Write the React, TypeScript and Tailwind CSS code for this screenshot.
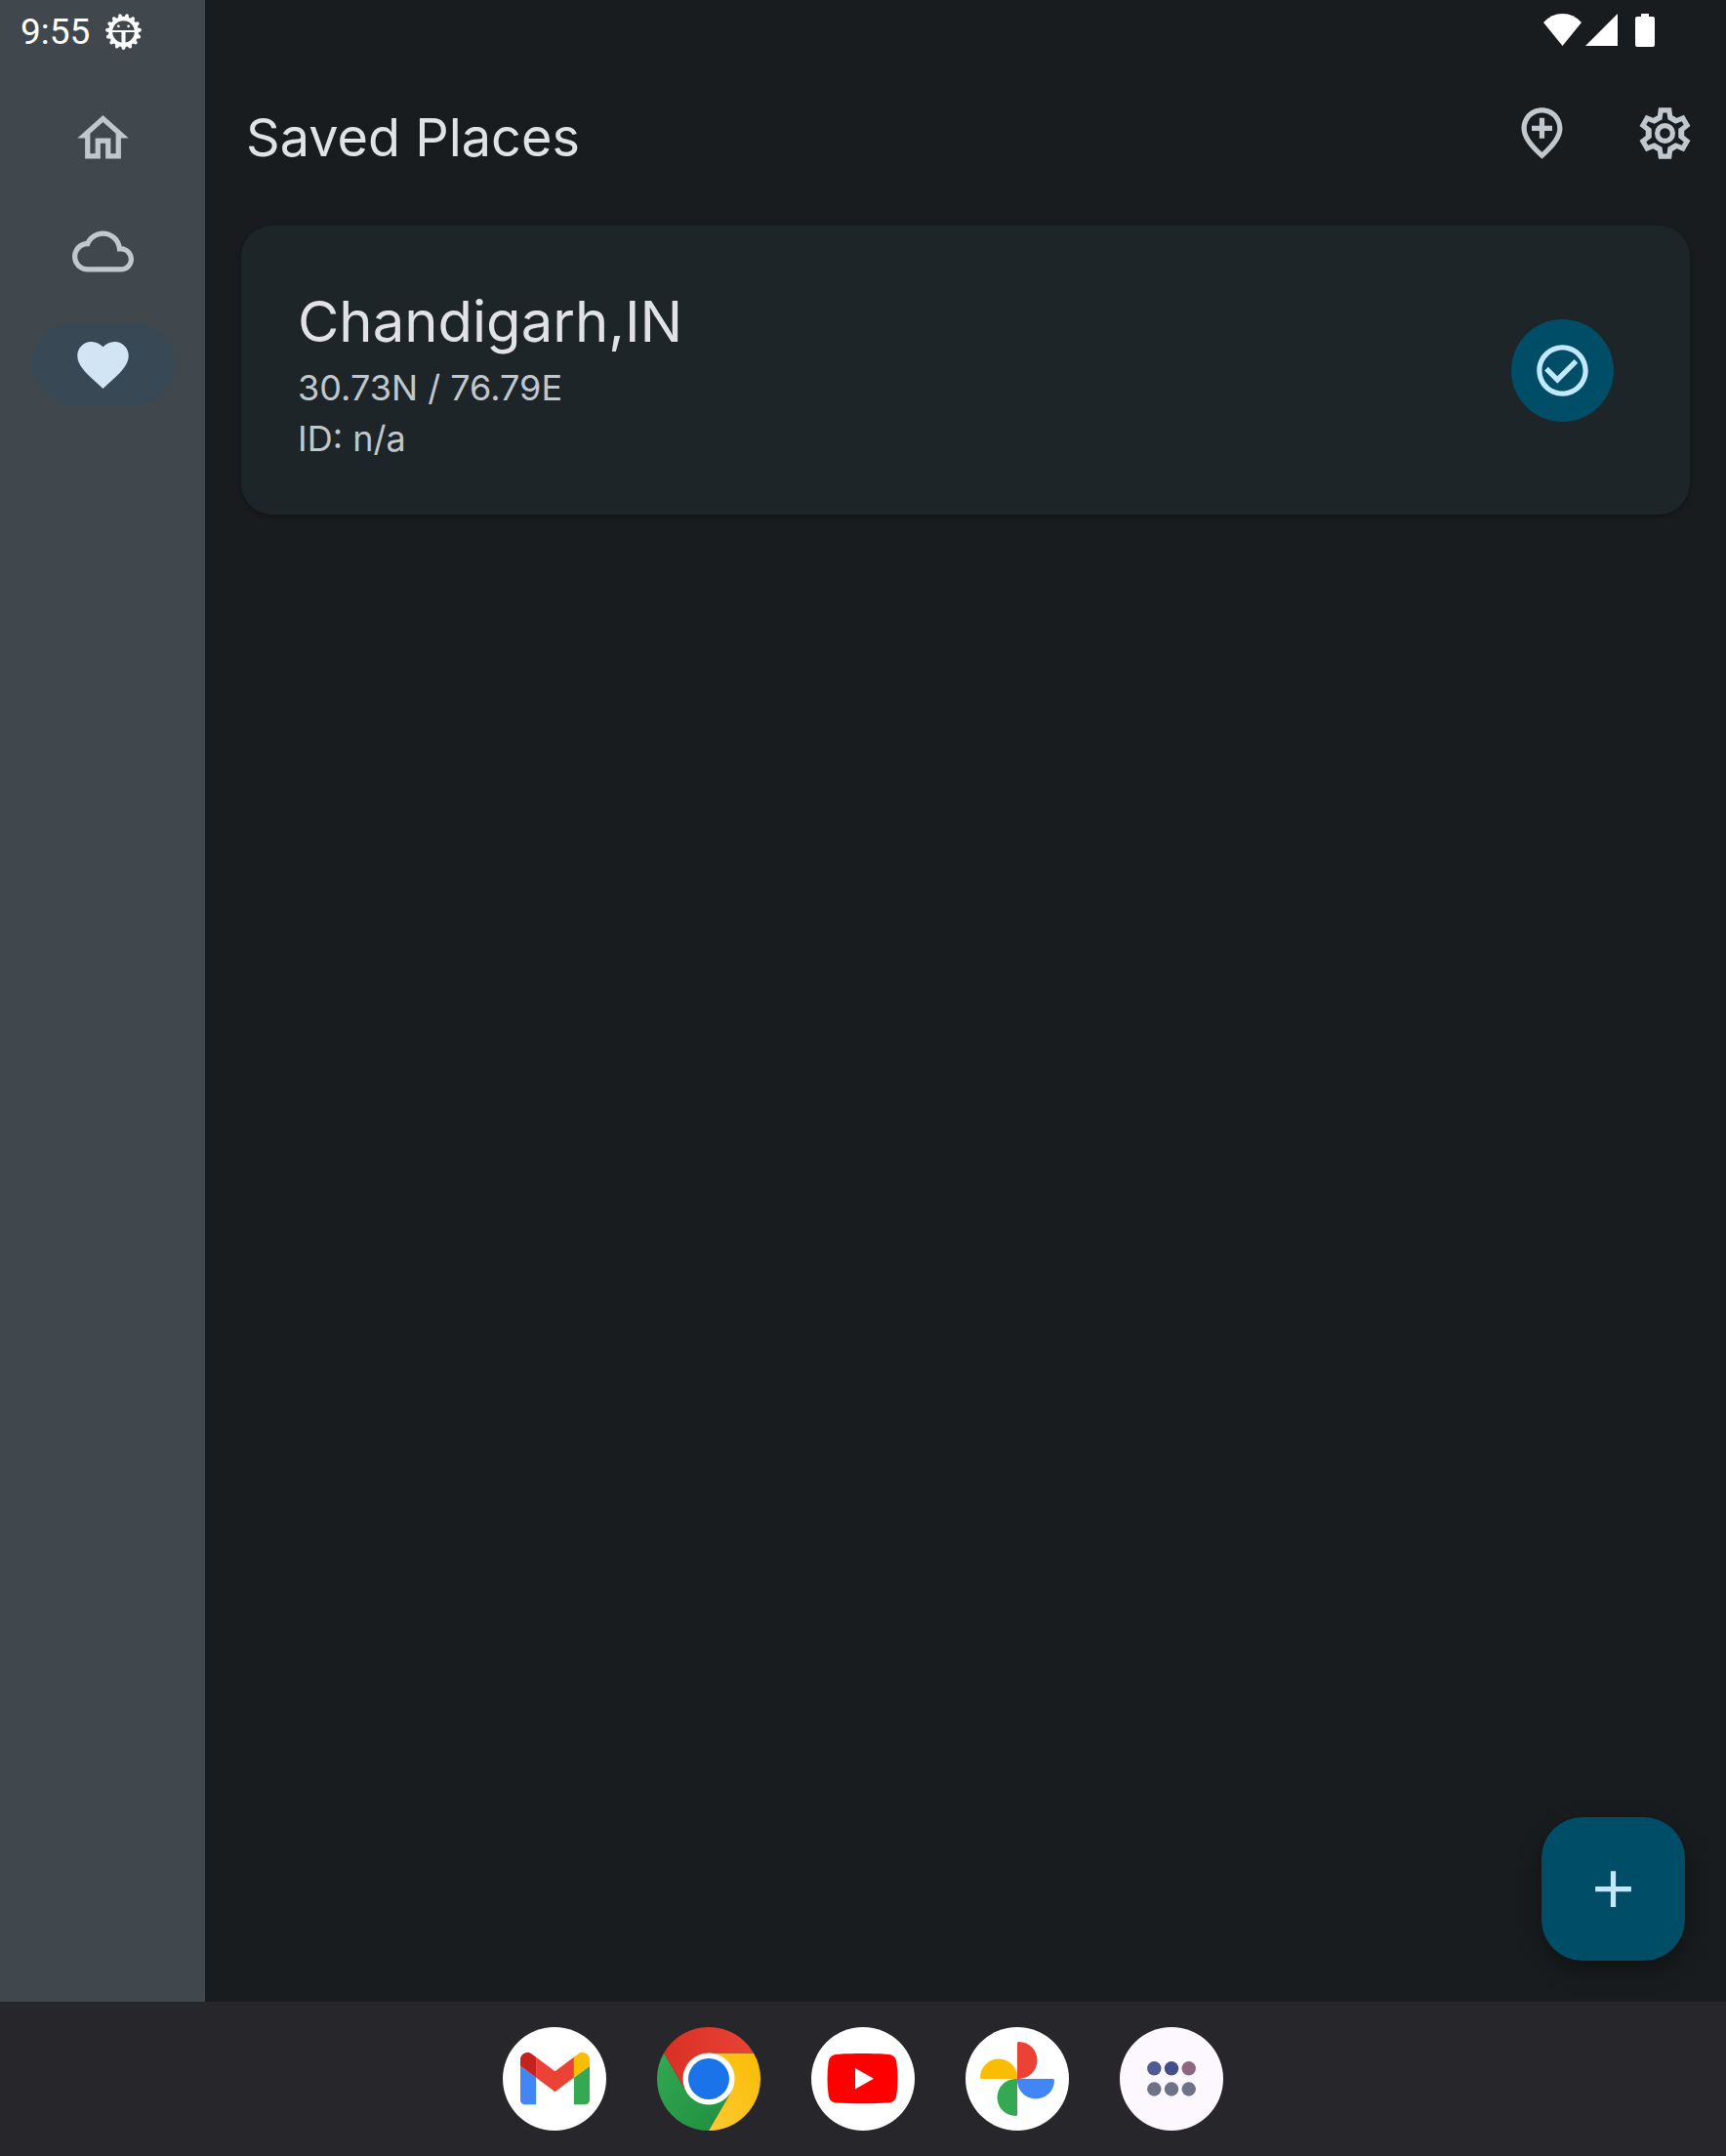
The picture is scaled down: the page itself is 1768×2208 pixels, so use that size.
import React from "react";

type IconProps = { d: string; className?: string };

function Icon({ d, className = "" }: IconProps) {
  return (
    <svg viewBox="0 0 24 24" fill="currentColor" aria-hidden="true" className={`size-[63px] shrink-0 ${className}`}>
      <path d={d} />
    </svg>
  );
}

const HOME = "M12 5.69l5 4.5V18h-2v-6H9v6H7v-7.81l5-4.5M12 3L2 12h3v8h6v-6h2v6h6v-8h3L12 3z";
const CLOUD =
  "M19.35 10.04C18.67 6.59 15.64 4 12 4 9.11 4 6.6 5.64 5.35 8.04 2.34 8.36 0 10.91 0 14c0 3.31 2.69 6 6 6h13c2.76 0 5-2.24 5-5 0-2.64-2.05-4.78-4.65-4.96zM19 18H6c-2.21 0-4-1.79-4-4s1.79-4 4-4h.71C7.37 7.69 9.48 6 12 6c3.04 0 5.5 2.46 5.5 5.5v.5H19c1.66 0 3 1.34 3 3s-1.34 3-3 3z";
const HEART =
  "M12 21.35l-1.45-1.32C5.4 15.36 2 12.28 2 8.5 2 5.42 4.42 3 7.5 3c1.74 0 3.41.81 4.5 2.09C13.09 3.81 14.76 3 16.5 3 19.58 3 22 5.42 22 8.5c0 3.78-3.4 6.86-8.55 11.54L12 21.35z";
const ADD_LOCATION =
  "M13 6v3h3v2h-3v3h-2v-3H8V9h3V6h2zm5 4.2C18 6.57 15.35 4 12 4s-6 2.57-6 6.2c0 2.34 1.95 5.44 6 9.14 4.05-3.7 6-6.8 6-9.14zM12 2c4.2 0 8 3.22 8 8.2 0 3.32-2.67 7.25-8 11.8-5.33-4.55-8-8.48-8-11.8C4 5.22 7.8 2 12 2z";
const CHECK =
  "M12 2C6.48 2 2 6.48 2 12s4.48 10 10 10 10-4.48 10-10S17.52 2 12 2zm0 18c-4.41 0-8-3.59-8-8s3.59-8 8-8 8 3.59 8 8-3.59 8-8 8zm4.59-12.42L10 14.17l-3.59-3.58L5 12l5 5 8-8z";
const PLUS = "M19 13h-6v6h-2v-6H5v-2h6V5h2v6h6v2z";

// Repeats one tooth's corners six times round the centre of a 24-unit box.
function cog(corners: number[][]) {
  const points: string[] = [];
  for (let i = 0; i < 6; i++) {
    const a = (i * Math.PI) / 3;
    for (const [x, y] of corners) {
      const px = 12 + x * Math.cos(a) - y * Math.sin(a);
      const py = 12 + x * Math.sin(a) + y * Math.cos(a);
      points.push(`${px.toFixed(2)} ${py.toFixed(2)}`);
    }
  }
  return `M${points.join("L")}z`;
}

const COG_OUTER = cog([[-2.9, -7], [-2.5, -10], [2.5, -10], [2.9, -7]]);
const COG_INNER = cog([[-1.13, -5.39], [-0.76, -8], [0.76, -8], [1.13, -5.39]]);

function Gear() {
  return (
    <svg viewBox="0 0 24 24" fill="currentColor" aria-hidden="true" className="size-[63px] shrink-0">
      <path fillRule="evenodd" d={COG_OUTER + COG_INNER} />
      <circle cx="12" cy="12" r="3" fill="none" stroke="currentColor" strokeWidth="2" />
    </svg>
  );
}

const TEETH = Array.from({ length: 15 }, (_, i) => i * 24 + 12);

function DebugGear() {
  return (
    <svg viewBox="0 0 36 36" aria-hidden="true" className="size-[37px] text-white">
      <circle cx="18" cy="18" r="13" fill="none" stroke="currentColor" strokeWidth="4" />
      {TEETH.map((a) => (
        <path key={a} d="M15.500 4 16.500 .8q1.500-1.600 3 0L20.500 4z" fill="currentColor" transform={`rotate(${a} 18 18)`} />
      ))}
      <path d="M6 16.500h24v2H6zM16 18h4v12h-4z" fill="currentColor" />
      <circle cx="13" cy="12.500" r="1.400" fill="currentColor" />
      <circle cx="23" cy="12.500" r="1.400" fill="currentColor" />
    </svg>
  );
}

function StatusBar() {
  return (
    <div className="flex h-14 items-start justify-end pt-[14px] pr-[73px] text-white">
      <svg viewBox="0 0 39 33" fill="currentColor" aria-label="Wi-Fi" className="h-[33px] w-[39px]">
        <path d="M19.500 33 0 9Q8 0 19.500 0T39 9z" />
      </svg>
      <svg viewBox="0 0 33 33" fill="currentColor" aria-label="Signal" className="ml-1 size-[33px]">
        <path d="M33 0v33H0z" />
      </svg>
      <svg viewBox="0 0 20 34" fill="currentColor" aria-label="Battery" className="ml-[18px] h-[34px] w-5">
        <path d="M6 0h8v3h4a2 2 0 0 1 2 2v27a2 2 0 0 1-2 2H2a2 2 0 0 1-2-2V5a2 2 0 0 1 2-2h4z" />
      </svg>
    </div>
  );
}

const NAV = [
  { label: "Home", d: HOME, active: false },
  { label: "Weather", d: CLOUD, active: false },
  { label: "Saved places", d: HEART, active: true },
];

function SideRail() {
  return (
    <aside className="flex w-[210px] shrink-0 flex-col bg-[#41484d]">
      <div className="flex h-[99px] items-start gap-4 pt-[14px] pl-[21px]">
        <time className="font-[Roboto,sans-serif] text-[37px] leading-[38px] text-white">9:55</time>
        <DebugGear />
      </div>
      <nav className="flex flex-col items-center gap-8">
        {NAV.map((item) => (
          <button
            key={item.label}
            type="button"
            aria-label={item.label}
            aria-current={item.active ? "page" : undefined}
            className={`flex h-21 w-[147px] items-center justify-center rounded-full ${
              item.active ? "bg-[#384955] text-[#d2e5f5]" : "text-[#c0c7cd]"
            }`}
          >
            <Icon d={item.d} />
          </button>
        ))}
      </nav>
    </aside>
  );
}

function PlaceCard() {
  return (
    <article className="flex items-center justify-between rounded-[32px] bg-[#1e2528] py-[52px] pr-[78px] pl-[58px] shadow-[0_3px_4px_rgba(0,0,0,0.25)]">
      <div className="pt-2">
        <h2 className="text-[58px] leading-[76px] text-[#e1e2e5]">Chandigarh,IN</h2>
        <div className="pt-1 text-[36px] leading-[52px] text-[#c0c7cd]">
          <p>30.73N / 76.79E</p>
          <p>ID: n/a</p>
        </div>
      </div>
      <button
        type="button"
        aria-label="Select place"
        className="flex size-[105px] items-center justify-center rounded-full bg-[#004d67] text-[#c1e8ff]"
      >
        <Icon d={CHECK} />
      </button>
    </article>
  );
}

function GmailLogo() {
  return (
    <svg viewBox="0 0 106 106" className="size-full" aria-hidden="true">
      <circle cx="53" cy="53" r="53" fill="#fff" />
      <g transform="translate(18 26) scale(.807) translate(-52 -42)">
        <path fill="#4285f4" d="M58 108h14V74L52 59v43c0 3.320 2.690 6 6 6" />
        <path fill="#34a853" d="M120 108h14c3.320 0 6-2.690 6-6V59l-20 15" />
        <path fill="#fbbc04" d="M120 48v26l20-15v-8c0-7.420-8.470-11.650-14.400-7.200" />
        <path fill="#ea4335" d="M72 74V48l24 18 24-18v26L96 92" />
        <path fill="#c5221f" d="M52 51v8l20 15V48l-5.600-4.200c-5.940-4.450-14.400-.220-14.400 7.200" />
      </g>
    </svg>
  );
}

function ChromeLogo() {
  return (
    <svg viewBox="0 0 106 106" className="size-full" aria-hidden="true">
      <defs>
        <linearGradient id="chrome-red" x1="0" x2="1">
          <stop offset="0" stopColor="#d93025" />
          <stop offset="1" stopColor="#ea4335" />
        </linearGradient>
        <linearGradient id="chrome-yellow" x1="1" y1="0" x2="0" y2="1">
          <stop offset="0" stopColor="#fbbc04" />
          <stop offset="1" stopColor="#fcc934" />
        </linearGradient>
        <linearGradient id="chrome-green" x1="0" y1="0" x2="1" y2="1">
          <stop offset="0" stopColor="#34a853" />
          <stop offset="1" stopColor="#1e8e3e" />
        </linearGradient>
      </defs>
      <path fill="url(#chrome-green)" d="M7.100 26.500A53 53 0 0 0 53 106L76 66.250 53 53 30 66.250z" />
      <path fill="url(#chrome-yellow)" d="M98.900 26.500A53 53 0 0 1 53 106L76 66.250 53 53V26.500z" />
      <path fill="url(#chrome-red)" d="M7.100 26.500a53 53 0 0 1 91.800 0H53V53L30 66.250z" />
      <circle cx="53" cy="53" r="26.500" fill="#fff" />
      <circle cx="53" cy="53" r="21" fill="#1a73e8" />
    </svg>
  );
}

function YouTubeLogo() {
  return (
    <svg viewBox="0 0 106 106" className="size-full" aria-hidden="true">
      <circle cx="53" cy="53" r="53" fill="#fff" />
      <path
        fill="#f00"
        d="M52.500 27c10 0 20 .300 27 1 4.500.500 7 3 7.800 7.500 1.600 11 1.600 23 0 34.500-.800 4.500-3.300 7-7.800 7.500-14 1-40 1-54 0-4.500-.500-7-3-7.800-7.500-1.600-11.500-1.600-23.500 0-34.500C18.500 31 21 28.500 25.500 28c7-.700 17-1 27-1z"
      />
      <path fill="#fff" d="M45 42v21.500l19-10.750z" />
    </svg>
  );
}

const PETALS = [
  { fill: "#ea4335", angle: 0 },
  { fill: "#4285f4", angle: 90 },
  { fill: "#34a853", angle: 180 },
  { fill: "#fbbc04", angle: 270 },
];

function PhotosLogo() {
  return (
    <svg viewBox="0 0 106 106" className="size-full" aria-hidden="true">
      <circle cx="53" cy="53" r="53" fill="#fff" />
      {PETALS.map((p) => (
        <path
          key={p.angle}
          fill={p.fill}
          transform={`rotate(${p.angle} 53 53)`}
          d="M53 53V16.500a1.500 1.500 0 0 1 1.500-1.500c10.500 0 19 8.500 19 19s-8.500 19-19 19z"
        />
      ))}
    </svg>
  );
}

const DOTS = [
  { x: 35.3, y: 42.3, fill: "#505a92" },
  { x: 53, y: 42.3, fill: "#454e87" },
  { x: 70.7, y: 42.3, fill: "#8d6680" },
  { x: 35.3, y: 63.5, fill: "#6e7286" },
  { x: 53, y: 63.5, fill: "#6e7286" },
  { x: 70.7, y: 63.5, fill: "#6e7286" },
];

function AllAppsLogo() {
  return (
    <svg viewBox="0 0 106 106" className="size-full" aria-hidden="true">
      <circle cx="53" cy="53" r="53" fill="#fdf8ff" />
      {DOTS.map((dot) => (
        <circle key={`${dot.x}-${dot.y}`} cx={dot.x} cy={dot.y} r="7.200" fill={dot.fill} />
      ))}
    </svg>
  );
}

const APPS = [
  { label: "Gmail", Logo: GmailLogo },
  { label: "Chrome", Logo: ChromeLogo },
  { label: "YouTube", Logo: YouTubeLogo },
  { label: "Photos", Logo: PhotosLogo },
  { label: "All apps", Logo: AllAppsLogo },
];

function Dock() {
  return (
    <footer className="flex justify-center gap-[52px] bg-[#27262b] py-[26px]">
      {APPS.map(({ label, Logo }) => (
        <button key={label} type="button" aria-label={label} className="size-[106px] rounded-full">
          <Logo />
        </button>
      ))}
    </footer>
  );
}

export default function App() {
  return (
    <div className="flex min-h-screen flex-col bg-[#191c1e] font-[Inter,sans-serif]">
      <div className="flex grow">
        <SideRail />
        <main className="flex grow flex-col">
          <StatusBar />
          <header className="flex items-start justify-between pt-[49px] pr-[31px] pl-[42px]">
            <h1 className="text-[54px] leading-[72px] text-[#e1e2e5]">Saved Places</h1>
            <div className="flex gap-[63px] text-[#c0c7cd]">
              <button type="button" aria-label="Add location">
                <Icon d={ADD_LOCATION} />
              </button>
              <button type="button" aria-label="Settings">
                <Gear />
              </button>
            </div>
          </header>
          <section className="px-[37px] pt-[54px]">
            <PlaceCard />
          </section>
          <button
            type="button"
            aria-label="Add place"
            className="mt-auto mr-[42px] mb-[42px] flex size-[147px] items-center justify-center self-end rounded-[42px] bg-[#004d67] text-[#c1e8ff] shadow-[0_10px_24px_rgba(0,0,0,0.35)]"
          >
            <Icon d={PLUS} />
          </button>
        </main>
      </div>
      <Dock />
    </div>
  );
}
